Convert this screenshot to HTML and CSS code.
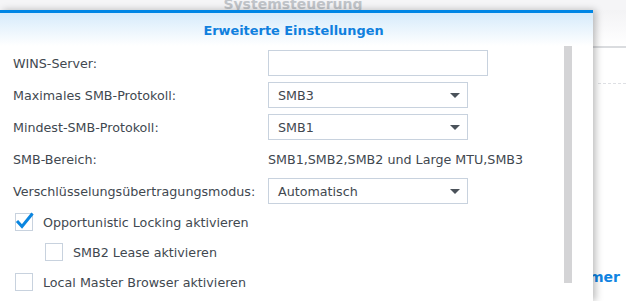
FILE: index.html
```html
<!DOCTYPE html>
<html>

<head>
    <meta charset="utf-8">
    <title>Erweiterte Einstellungen</title>
    <link rel="stylesheet" href="styles.css">
</head>

<body>
    <!-- control panel window behind the dialog -->
    <div class="panel">
        <div class="panel_title">Systemsteuerung</div>
        <div class="panel_body">
            <div class="panel_top"></div>
            <div class="panel_dots"></div>
            <div class="panel_link">Nummer</div>
        </div>
    </div>

    <div class="dialog">
        <header class="dialog_head">
            <h1 class="dialog_title">Erweiterte Einstellungen</h1>
        </header>
        <main class="dialog_body">
            <form class="form">
                <div class="row">
                    <label class="label">WINS-Server:</label>
                    <div class="field wide"></div>
                </div>
                <div class="row">
                    <label class="label">Maximales SMB-Protokoll:</label>
                    <div class="field select">SMB3<span class="arrow"></span></div>
                </div>
                <div class="row">
                    <label class="label">Mindest-SMB-Protokoll:</label>
                    <div class="field select">SMB1<span class="arrow"></span></div>
                </div>
                <div class="row">
                    <label class="label">SMB-Bereich:</label>
                    <div class="value">SMB1,SMB2,SMB2 und Large MTU,SMB3</div>
                </div>
                <div class="row">
                    <label class="label">Verschlüsselungsübertragungsmodus:</label>
                    <div class="field select">Automatisch<span class="arrow"></span></div>
                </div>
                <div class="checks">
                    <div class="check">
                        <span class="box">
                            <svg width="18" height="18" viewBox="0 0 18 18">
                                <path d="M2 8 L7 13.5 L17.5 0.5" fill="none" stroke="#0a86e0" stroke-width="3"/>
                            </svg>
                        </span>
                        <span>Opportunistic Locking aktivieren</span>
                    </div>
                    <div class="check sub">
                        <span class="box"></span>
                        <span>SMB2 Lease aktivieren</span>
                    </div>
                    <div class="check">
                        <span class="box"></span>
                        <span>Local Master Browser aktivieren</span>
                    </div>
                </div>
            </form>
            <div class="scrollbar"></div>
        </main>
    </div>
</body>

</html>
```

FILE: styles.css
```css
html {
    background-color: rgb(245, 245, 247);
}

body {
    margin: 0;
    height: 301px;
    overflow: hidden;
    position: relative;
    font-family: "DejaVu Sans", Verdana, sans-serif;
    font-size: 12.7px;
    color: rgb(65, 72, 80);
}

.panel {
    height: 301px;
}

.panel_title {
    height: 10px;
    overflow: hidden;
    text-align: center;
    padding-right: 40px;
    font-size: 14px;
    font-weight: bold;
    line-height: 8px;
    color: rgb(192, 196, 201);
}

.panel_body {
    height: 291px;
    background-color: #fff;
}

.panel_top {
    height: 36px;
    background: linear-gradient(rgb(243, 243, 245), #fff);
    border-bottom: 2px solid rgb(218, 220, 223);
}

.panel_dots {
    margin: 35px 0 0 598px;
    border-top: 1px dashed rgb(222, 224, 228);
}

.panel_link {
    margin-top: 185px;
    padding-right: 6px;
    text-align: right;
    font-size: 14px;
    font-weight: bold;
    color: rgb(16, 132, 226);
}

.dialog {
    position: absolute;
    left: 0;
    top: 10px;
    width: 593px;
    height: 291px;
    background-color: #fff;
    border-top: 3px solid rgb(0, 134, 229);
    box-shadow: 3px 0 7px rgba(0, 0, 0, 0.25);
    box-sizing: border-box;
    display: flex;
    flex-direction: column;
}

.dialog_head {
    height: 33px;
    padding-right: 6px;
    background: linear-gradient(rgb(214, 235, 251), #fff);
    display: flex;
    align-items: center;
    justify-content: center;
}

.dialog_title {
    margin: 1px 0 0 0;
    font-size: 12.9px;
    font-weight: bold;
    color: rgb(16, 128, 222);
}

.dialog_body {
    flex: 1;
    display: flex;
    overflow: hidden;
}

.form {
    flex: 1;
    padding: 4px 0 0 13px;
}

.row {
    display: flex;
    align-items: center;
    height: 26px;
    margin-bottom: 6px;
}

.label {
    width: 255px;
    white-space: nowrap;
}

.field {
    height: 26px;
    box-sizing: border-box;
    border: 1px solid rgb(200, 210, 222);
    display: flex;
    align-items: center;
    padding: 0 7px 0 9px;
}

.select {
    width: 200px;
    justify-content: space-between;
}

.wide {
    width: 220px;
}

.arrow {
    width: 0;
    height: 0;
    border-left: 5px solid transparent;
    border-right: 5px solid transparent;
    border-top: 5px solid rgb(75, 82, 90);
}

.value {
    white-space: nowrap;
}

.checks {
    display: flex;
    flex-direction: column;
    gap: 12px;
    padding: 3px 0 0 2px;
}

.check {
    display: flex;
    align-items: center;
    gap: 10px;
    height: 18px;
}

.check.sub {
    margin-left: 30px;
}

.box {
    width: 18px;
    height: 18px;
    box-sizing: border-box;
    border: 1px solid rgb(200, 210, 222);
    display: flex;
}

.box svg {
    margin: -1px;
    overflow: visible;
}

.scrollbar {
    width: 8px;
    height: 237px;
    margin: 0 21px 0 0;
    background-color: rgb(212, 212, 214);
}
```
